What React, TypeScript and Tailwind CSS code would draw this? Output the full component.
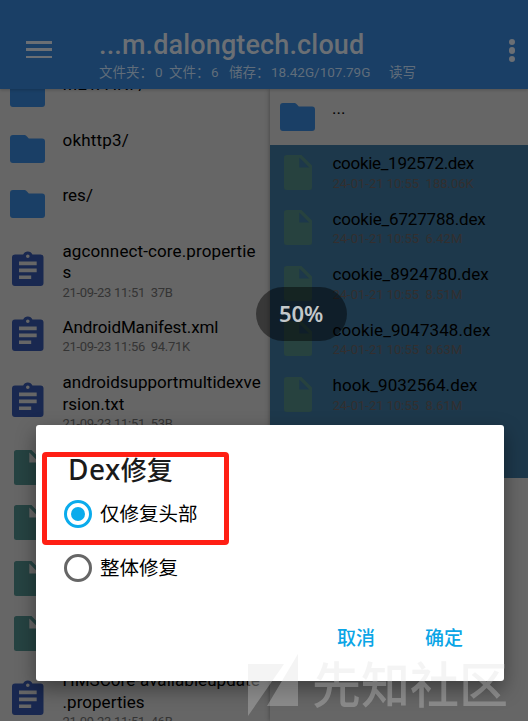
import React from "react";

const FolderIcon = () => (
  <svg viewBox="0 0 35 28" className="h-7 w-[35px] shrink-0 fill-[#1a3f66]">
    <path d="M3 0h11.500a2.500 2.500 0 0 1 1.700 .700L18.800 3.500h13.200a3 3 0 0 1 3 3V25a3 3 0 0 1-3 3H3a3 3 0 0 1-3-3V3a3 3 0 0 1 3-3z" />
  </svg>
);

const ClipIcon = () => (
  <svg viewBox="0 0 32 35" className="ml-0.5 -mt-[4px] h-[35px] w-8 shrink-0">
    <path
      fillRule="evenodd"
      className="fill-[#192850]"
      d="M3 3.5h8.2a5 5 0 0 1 9.2 0H28.500a3 3 0 0 1 3 3V32a3 3 0 0 1-3 3H3a3 3 0 0 1-3-3V6.500a3 3 0 0 1 3-3zM15.800 3.400a1.800 1.800 0 1 0 0 3.600a1.800 1.800 0 0 0 0-3.600zM7 10.500v3.700h17.700v-3.700zM7 17.500v3.700h17.700v-3.700zM7 24.400v3.700h12.200v-3.700z"
    />
  </svg>
);

const FileIcon = ({ color }: { color: string }) => (
  <svg viewBox="0 0 28 35" className="h-[35px] w-7 shrink-0">
    <path
      fill={color}
      fillRule="evenodd"
      d="M2.500 0H17.500L28 10.500V32.500a2.500 2.500 0 0 1-2.500 2.500H2.500A2.500 2.500 0 0 1 0 32.500V2.500A2.500 2.500 0 0 1 2.500 0zM15.300 2.500V12.500H25.200z"
    />
  </svg>
);

const nameCls = "whitespace-pre text-[17px] leading-[21.5px]";
const metaCls = "whitespace-pre text-[13px] leading-[18px]";

type Row = { kind: "folder" | "clip" | "teal"; lines: string[]; meta?: string; track?: string };

const left: Row[] = [
  { kind: "folder", lines: ["META-INF/"] },
  { kind: "folder", lines: ["okhttp3/"], track: "tracking-[0.2px]" },
  { kind: "folder", lines: ["res/"] },
  { kind: "clip", lines: ["agconnect-core.propertie", "s"], meta: "21-09-23 11:51  37B", track: "tracking-[0.12px]" },
  { kind: "clip", lines: ["AndroidManifest.xml"], meta: "21-09-23 11:56  94.71K", track: "tracking-[-0.1px]" },
  { kind: "clip", lines: ["androidsupportmultidexve", "rsion.txt"], meta: "21-09-23 11:51  53B" },
  { kind: "teal", lines: [] },
  { kind: "teal", lines: [] },
  { kind: "teal", lines: [] },
  { kind: "teal", lines: [] },
  { kind: "clip", lines: ["HMSCore-availableupdate", ".properties"], meta: "21-09-23 11:51  46B", track: "tracking-[0.05px]" },
];

const right = [
  ["cookie_192572.dex", "24-01-21 10:55  188.06K", "tracking-[-0.3px]"],
  ["cookie_6727788.dex", "24-01-21 10:55  6.42M", "tracking-[-0.17px]"],
  ["cookie_8924780.dex", "24-01-21 10:55  8.51M", "tracking-normal"],
  ["cookie_9047348.dex", "24-01-21 10:55  8.63M", "tracking-[0.1px]"],
  ["hook_9032564.dex", "24-01-21 10:55  8.61M", "tracking-[0.1px]"],
];

export default function App() {
  return (
    <div className="relative flex h-[721px] w-[528px] flex-col overflow-hidden bg-[#666666] font-[Roboto,'Noto_Sans_CJK_SC',sans-serif] text-black">
      <header className="z-10 flex h-[89px] shrink-0 items-start bg-[#1a3f66] pl-[26px] shadow-[0_1px_3px_rgba(0,0,0,0.2)]">
        <div className="mt-[41px] flex w-[26px] flex-col gap-[4.500px]">
          <span className="h-[2.800px] bg-[#6b6f74]" />
          <span className="h-[2.800px] bg-[#6b6f74]" />
          <span className="h-[2.800px] bg-[#6b6f74]" />
        </div>
        <div className="ml-[47px] mt-[29px] flex-1 whitespace-pre">
          <h1 className="text-[27px] font-medium leading-[33px] tracking-[0.14px] text-[#6b6f74]">...m.dalongtech.cloud</h1>
          <div className="flex text-[13.500px] leading-[20px] text-[#606d7a]">
            <span className="w-[56px]">文件夹：</span>
            <span className="w-[14px]">0</span>
            <span className="w-[42px]">文件：</span>
            <span className="w-[18px]">6</span>
            <span className="w-[42px]">储存：</span>
            <span className="w-[118px]">18.42G/107.79G</span>
            <span>读写</span>
          </div>
        </div>
        <div className="mr-[13px] mt-[38.500px] flex flex-col gap-[2px]">
          <span className="size-[6.500px] rounded-full bg-[#6b6f74]" />
          <span className="size-[6.500px] rounded-full bg-[#6b6f74]" />
          <span className="size-[6.500px] rounded-full bg-[#6b6f74]" />
        </div>
      </header>

      <main className="flex min-h-0 flex-1">
        <section className="w-[270px] shrink-0 overflow-hidden">
          <div className="-mt-[23.500px]">
            {left.map((r, i) => (
              <div
                key={i}
                className={`flex items-center pl-[10px] ${r.lines.length > 1 ? "h-[76px]" : "h-[55.500px]"}`}
              >
                <div className="flex w-[52.500px] shrink-0 items-center">
                  {r.kind === "folder" && <FolderIcon />}
                  {r.kind === "clip" && <ClipIcon />}
                  {r.kind === "teal" && (
                    <div className="ml-1">
                      <FileIcon color="#264342" />
                    </div>
                  )}
                </div>
                <div className="h-full pt-[8.500px]">
                  {r.lines.map((l) => (
                    <p key={l} className={`${nameCls} ${r.track ?? ""}`}>{l}</p>
                  ))}
                  {r.meta && <p className={`${metaCls} tracking-[-0.3px] text-[#343434]`}>{r.meta}</p>}
                </div>
              </div>
            ))}
          </div>
        </section>

        <section className="flex-1 shadow-[-1px_0_4px_rgba(0,0,0,0.25)]">
          <div className="flex h-[55.500px] items-center pl-[10px]">
            <FolderIcon />
            <p className={`${nameCls} -mt-[16px] ml-[17px]`}>...</p>
          </div>
          <div className="h-[333px] bg-[#1d384b]">
            {right.map(([n, m, track]) => (
              <div key={n} className="flex h-[55.500px] items-center pl-[14px]">
                <FileIcon color="#27423f" />
                <div className="ml-[20.500px] h-full pt-[8.500px]">
                  <p className={`${nameCls} ${track}`}>{n}</p>
                  <p className={`${metaCls} text-[#332f2f]`}>{m}</p>
                </div>
              </div>
            ))}
          </div>
        </section>
      </main>

      <div className="absolute left-[256px] top-[287px] z-20 flex h-[54px] w-[91px] items-center justify-center rounded-full bg-black/45 pb-[2px] pr-[1px] text-[22px] font-semibold tracking-[-0.1px] text-[#c3c8ca] font-['Noto_Sans',sans-serif]">
        50%
      </div>

      <div className="absolute left-[36px] top-[425px] z-30 flex h-[256px] w-[468px] flex-col rounded-[3px] bg-white pl-[28px] shadow-[0_8px_20px_rgba(0,0,0,0.4)]">
        <h2 className="ml-[4px] mt-[27px] h-[34px] whitespace-nowrap text-[26px] font-medium leading-[34px] text-[#1a1a1a]">
          <span className="font-['Noto_Sans',sans-serif] text-[28px] tracking-[0.5px]">Dex</span>修复
        </h2>
        <div className="mt-[14px] flex h-[28px] items-center text-[19.500px]">
          <span className="flex size-[28px] items-center justify-center rounded-full border-[3px] border-[#0aabec]">
            <span className="size-[14px] rounded-full bg-[#0aabec]" />
          </span>
          <span className="ml-[8px] pt-[2px]">仅修复头部</span>
        </div>
        <div className="mt-[26px] flex h-[28px] items-center text-[19.500px]">
          <span className="size-[28px] rounded-full border-[3px] border-[#666]" />
          <span className="ml-[8px] pt-[2px]">整体修复</span>
        </div>
        <div className="mr-[41px] mt-[43px] flex justify-end gap-[50px] text-[19px] font-medium leading-[28px] text-[#0aa5e6]">
          <span>取消</span>
          <span>确定</span>
        </div>
      </div>

      <div className="absolute left-[42px] top-[452px] z-40 h-[93px] w-[187px] rounded-[4px] border-[5px] border-[#ff1f14]" />

      <div className="absolute left-[248px] top-[654px] z-40 flex opacity-30">
        <svg viewBox="0 0 50 62" className="h-[62px] w-[50px] fill-[#ddd]">
          <path d="M0 10H36L0 62zM50 0V52H19z" />
        </svg>
        <span className="ml-[14px] mt-[2px] whitespace-nowrap text-[49px] font-medium leading-[62px] text-[#ddd]">先知社区</span>
      </div>
    </div>
  );
}
